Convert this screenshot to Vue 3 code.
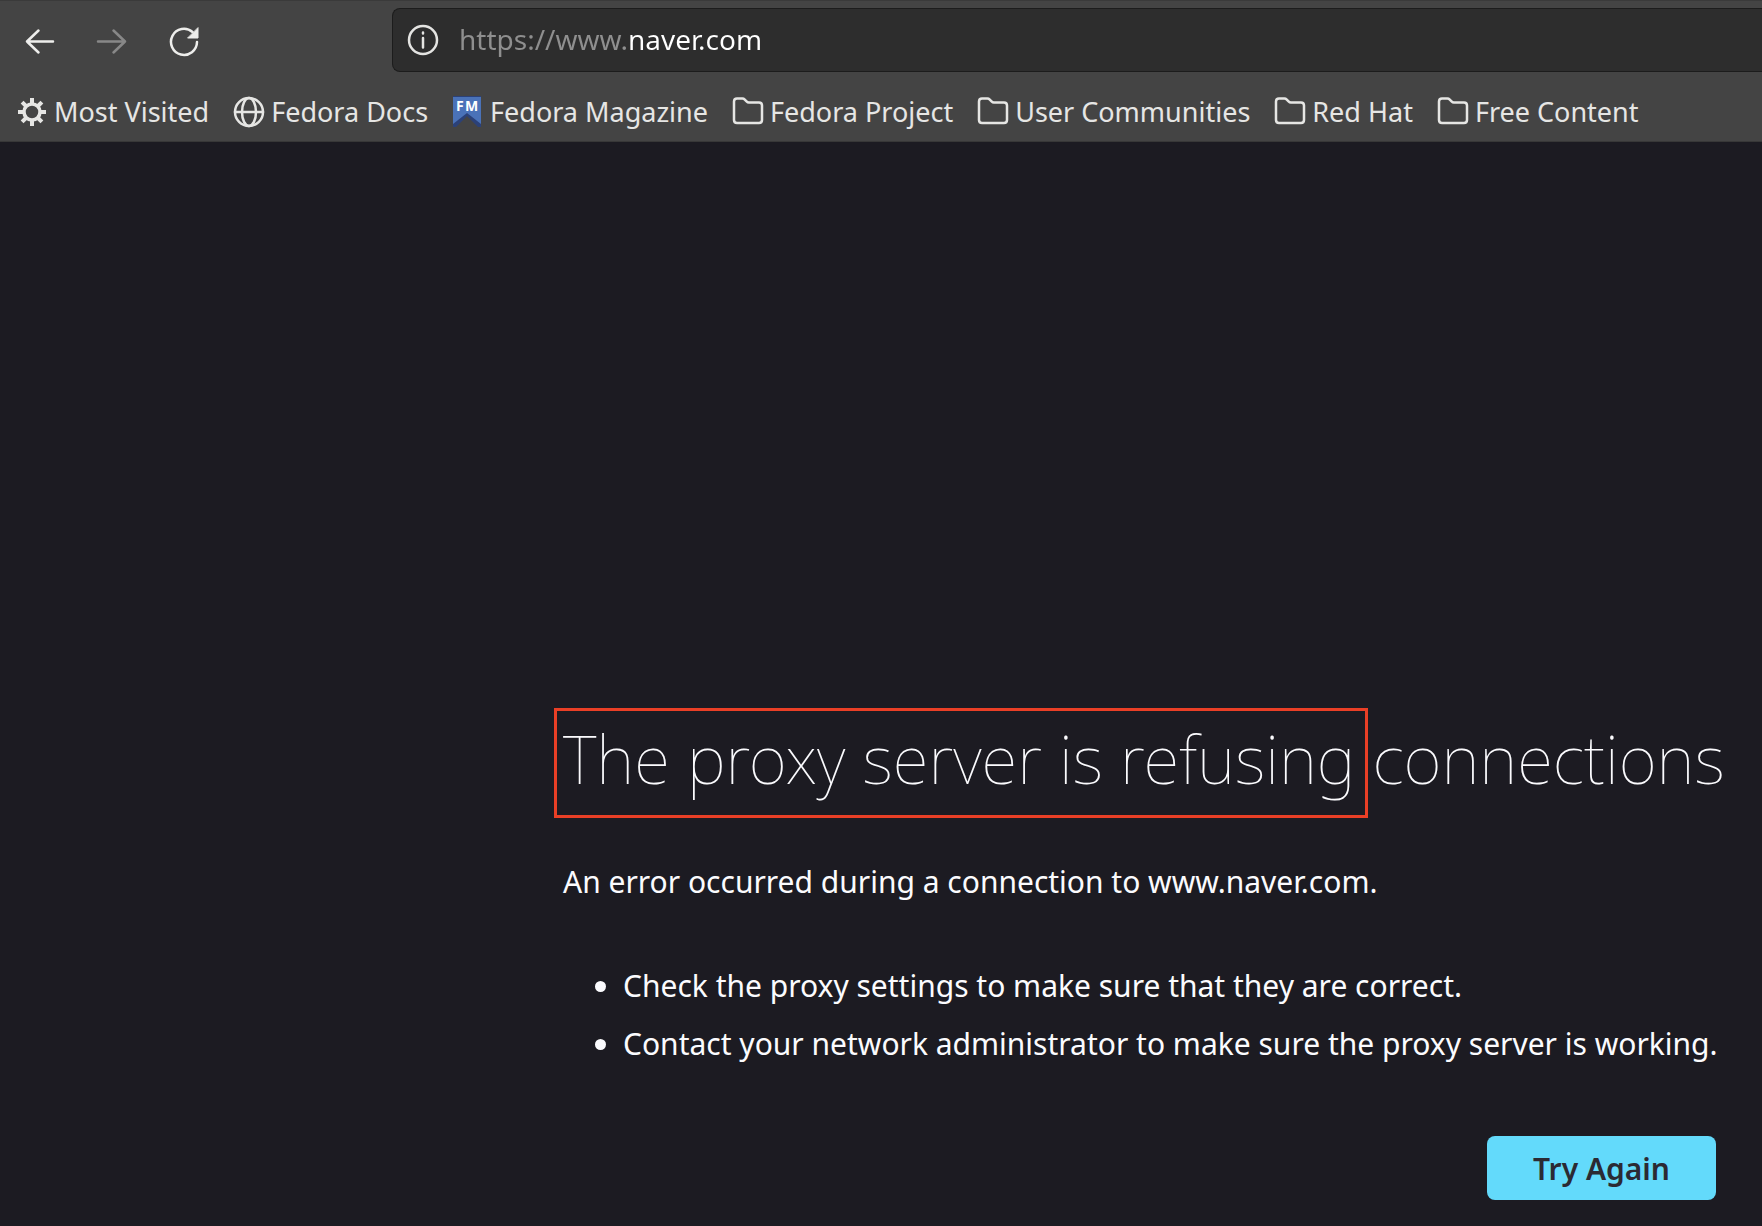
<template>
	<div class="browser">
		<header class="chrome">
			<div class="nav-bar">
				<div class="nav-buttons">
					<button type="button" class="nav-button" aria-label="Back">
						<svg viewBox="0 0 32 32" width="32" height="32" class="line">
							<path d="M29 16.500H3M14.500 5.500L3 16.500L14.500 27.500" />
						</svg>
					</button>
					<button type="button" class="nav-button" aria-label="Forward" disabled>
						<svg viewBox="0 0 32 32" width="32" height="32" class="line">
							<path d="M2 16.500H29M17.500 5.500L29 16.500L17.500 27.500" />
						</svg>
					</button>
					<button type="button" class="nav-button" aria-label="Reload">
						<svg viewBox="0 0 32 32" width="32" height="32" class="line">
							<path d="M29 17A13 13 0 1 1 24.500 7" />
							<path class="solid" d="M30 3V13H20Z" />
						</svg>
					</button>
				</div>
				<div class="url-bar">
					<svg viewBox="0 0 32 32" width="32" height="32" class="line">
						<circle cx="16" cy="16" r="14" />
						<path d="M16 14V23.500M16 8.500V9.500" />
					</svg>
					<input v-model="url" class="url-input" type="text" aria-label="Address" spellcheck="false" />
				</div>
			</div>
			<nav class="bookmarks">
				<a v-for="item in bookmarks" :key="item.label" href="#" class="bookmark">
					<svg v-if="item.icon === 'gear'" viewBox="0 0 32 32" width="32" height="32" class="line">
						<circle cx="16" cy="16" r="8" stroke-width="3.500" />
						<path
							stroke-width="4"
							stroke-linecap="butt"
							d="M16 2V8M16 24V30M2 16H8M24 16H30M6.100 6.100L10.500 10.500M21.500 21.500L25.900 25.900M25.900 6.100L21.500 10.500M10.500 21.500L6.100 25.900"
						/>
					</svg>
					<svg v-else-if="item.icon === 'globe'" viewBox="0 0 32 32" width="32" height="32" class="line">
						<circle cx="16" cy="16" r="14" />
						<ellipse cx="16" cy="16" rx="7" ry="14" />
						<path d="M2 16H30" />
					</svg>
					<svg v-else-if="item.icon === 'fm'" viewBox="0 0 32 32" width="32" height="32">
						<path fill="#2b4178" d="M1 0H29V31H26L15 20L4 31H1Z" />
						<path fill="#4a72b8" d="M1 1H29V28L15 17L1 28Z" />
						<text x="4 13" y="15" class="fm-text">FM</text>
					</svg>
					<svg v-else viewBox="0 0 32 32" width="32" height="32" class="line">
						<path
							d="M5 2.500H10.500Q11.700 2.500 12.500 3.300L14.800 5.600Q15.600 6.400 16.800 6.400H27Q30 6.400 30 9.400V24Q30 27 27 27H5Q2 27 2 24V5.500Q2 2.500 5 2.500Z"
						/>
					</svg>
					<span>{{ item.label }}</span>
				</a>
			</nav>
		</header>
		<main class="error-page">
			<div class="error-body">
				<h1 class="title"><span class="marked">The proxy server is refusing</span> connections</h1>
				<p class="description">An error occurred during a connection to www.naver.com.</p>
				<ul class="hints">
					<li v-for="hint in hints" :key="hint">{{ hint }}</li>
				</ul>
				<div class="actions">
					<button type="button" class="try-again">Try Again</button>
				</div>
			</div>
		</main>
	</div>
</template>

<script setup>
import { ref } from "vue";

const url = ref("https://www.naver.com");
const bookmarks = [
	{ label: "Most Visited", icon: "gear" },
	{ label: "Fedora Docs", icon: "globe" },
	{ label: "Fedora Magazine", icon: "fm" },
	{ label: "Fedora Project", icon: "folder" },
	{ label: "User Communities", icon: "folder" },
	{ label: "Red Hat", icon: "folder" },
	{ label: "Free Content", icon: "folder" },
];
const hints = [
	"Check the proxy settings to make sure that they are correct.",
	"Contact your network administrator to make sure the proxy server is working.",
];
</script>

<style>
body {
	margin: 0;
	background: #1c1b22;
}
</style>

<style scoped>
.browser {
	min-height: 100vh;
	display: flex;
	flex-direction: column;
	overflow: hidden;
	box-sizing: border-box;
	font-family: "Noto Sans", sans-serif;
	color: #fbfbfe;
	background: #1c1b22;
}
.chrome {
	background: #444444;
	border-top: 1px solid #3a3a3a;
	border-bottom: 1px solid #383838;
}
.nav-bar {
	display: flex;
	align-items: center;
	padding-top: 7px;
}
.nav-buttons {
	flex: none;
	display: flex;
	gap: 40px;
	width: 368px;
	padding-top: 2px;
	padding-left: 24px;
}
.nav-button {
	display: flex;
	padding: 0;
	border: 0;
	background: none;
	color: #eeeeec;
}
.nav-button:disabled {
	color: #888888;
}
.line {
	fill: none;
	stroke: currentColor;
	stroke-width: 2.5;
	stroke-linecap: round;
	stroke-linejoin: round;
}
.solid {
	fill: currentColor;
	stroke-width: 1;
}
.url-bar {
	flex: 1;
	display: flex;
	align-items: center;
	gap: 20px;
	height: 62px;
	padding-left: 14px;
	border: 1px solid #1c1c1c;
	border-right: 0;
	border-radius: 8px 0 0 8px;
	background: #2d2d2d;
	color: #e4e4e2;
}
.url-input {
	flex: 1;
	min-width: 0;
	padding: 0 0 2px;
	border: 0;
	outline: 0;
	font: 28px/40px "Noto Sans", sans-serif;
	/* dim the scheme and subdomain, keep the domain bright */
	background: linear-gradient(90deg, #8f8f8f 168px, #ffffff 168px);
	-webkit-background-clip: text;
	background-clip: text;
	color: transparent;
	caret-color: #ffffff;
}
.bookmarks {
	display: flex;
	gap: 24px;
	height: 69px;
	padding-left: 16px;
	align-items: center;
	box-sizing: border-box;
	padding-top: 10px;
}
.bookmark {
	display: flex;
	align-items: center;
	gap: 6px;
	color: #e6e6e4;
	font-size: 27px;
	line-height: 36px;
	white-space: nowrap;
	text-decoration: none;
}
.bookmark svg {
	flex: none;
}
.fm-text {
	font: bold 14px "Noto Sans", sans-serif;
	fill: #ffffff;
}
.error-page {
	flex: 1;
	display: flex;
	justify-content: flex-end;
	align-items: flex-end;
	padding: 0 46px 26px;
}
.error-body {
	width: 1153px;
}
.title {
	margin: 0 0 52px;
	font-size: 66px;
	font-weight: 100;
	line-height: 104px;
	white-space: nowrap;
}
.marked {
	position: relative;
}
.marked::after {
	content: "";
	position: absolute;
	inset: -5px -13px -15px -9px;
	border: 3px solid #ea3f26;
}
.description {
	margin: 0 0 64px;
	font-size: 30px;
	line-height: 40px;
}
.hints {
	margin: 0 0 72px;
	padding-left: 60px;
	font-size: 30px;
	line-height: 40px;
}
.hints li {
	margin-bottom: 18px;
	white-space: nowrap;
}
.actions {
	display: flex;
	justify-content: flex-end;
}
.try-again {
	height: 64px;
	padding: 2px 46px 0;
	border: 0;
	border-radius: 8px;
	background: #63dafb;
	color: #2b2a33;
	font: 600 30px/40px "Noto Sans", sans-serif;
}
</style>
